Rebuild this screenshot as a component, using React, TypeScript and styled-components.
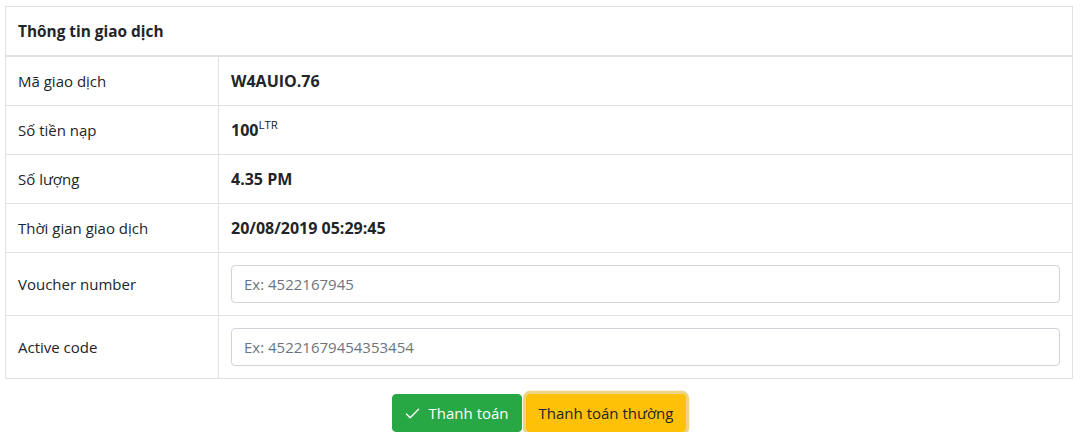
import React from "react";
import styled, { createGlobalStyle } from "styled-components";

const GlobalStyle = createGlobalStyle`
  *, *::before, *::after { box-sizing: border-box; }
  html, body { margin: 0; padding: 0; background: #fff; }
  body {
    font-family: "Open Sans", "Noto Sans", sans-serif;
    font-size: 15px;
    line-height: 24px;
    color: #212529;
  }
`;

const Page = styled.div`
  padding: 6px 8px 0 5px;
`;

const Table = styled.table`
  width: 100%;
  border-collapse: collapse;
  border: 1px solid #dee2e6;
  margin-bottom: 15px;
`;

const HeadCell = styled.th`
  text-align: left;
  font-weight: 700;
  font-size: 15.4px;
  padding: 13px 12px 11px;
  border: 1px solid #dee2e6;
  border-bottom: 2px solid #dee2e6;
  vertical-align: bottom;
`;

const LabelCell = styled.td`
  width: 213px;
  padding: 12px;
  border: 1px solid #dee2e6;
  vertical-align: middle;
`;

const ValueCell = styled.td<{ $bold?: boolean }>`
  padding: 12px;
  border: 1px solid #dee2e6;
  vertical-align: middle;
  font-weight: ${(p) => (p.$bold ? 700 : 400)};
  font-size: ${(p) => (p.$bold ? "16px" : "15px")};
`;

const Sup = styled.sup`
  font-size: 11.5px;
  font-weight: 400;
  line-height: 0;
  position: relative;
  vertical-align: baseline;
  top: -0.6em;
`;

const Input = styled.input`
  display: block;
  width: 100%;
  height: 38px;
  padding: 6px 12px;
  font-family: inherit;
  font-size: 15px;
  line-height: 24px;
  color: #495057;
  background: #fff;
  border: 1px solid #ced4da;
  border-radius: 4px;
  outline: none;
  &::placeholder { color: #6c757d; opacity: 1; }
`;

const Actions = styled.div`
  display: flex;
  justify-content: center;
  gap: 4px;
`;

const Button = styled.button<{ $variant: "success" | "warning"; $focus?: boolean }>`
  display: inline-flex;
  align-items: center;
  gap: 9px;
  height: 38px;
  padding: 6px 12px;
  font-family: inherit;
  font-size: 15px;
  line-height: 24px;
  border-radius: 4px;
  border: 1px solid ${(p) => (p.$variant === "success" ? "#28a745" : "#ffc107")};
  background: ${(p) => (p.$variant === "success" ? "#28a745" : "#ffc107")};
  color: ${(p) => (p.$variant === "success" ? "#fff" : "#212529")};
  box-shadow: ${(p) => (p.$focus ? "0 0 0 3.2px rgba(222,170,12,.5)" : "none")};
  cursor: pointer;
`;

const CheckIcon = () => (
  <svg width="15" height="15" viewBox="0 0 16 16" fill="none" stroke="currentColor" strokeWidth="1.4" strokeLinecap="round" strokeLinejoin="round">
    <polyline points="1.5,8.5 5.5,12.5 14.5,3.5" />
  </svg>
);

const rows: { label: string; value: React.ReactNode }[] = [
  { label: "Mã giao dịch", value: "W4AUIO.76" },
  { label: "Số tiền nạp", value: <>100<Sup>LTR</Sup></> },
  { label: "Số lượng", value: "4.35 PM" },
  { label: "Thời gian giao dịch", value: "20/08/2019 05:29:45" },
];

export default function App() {
  return (
    <Page>
      <GlobalStyle />
      <Table>
        <thead>
          <tr>
            <HeadCell colSpan={2}>Thông tin giao dịch</HeadCell>
          </tr>
        </thead>
        <tbody>
          {rows.map((r) => (
            <tr key={r.label}>
              <LabelCell>{r.label}</LabelCell>
              <ValueCell $bold>{r.value}</ValueCell>
            </tr>
          ))}
          <tr>
            <LabelCell>Voucher number</LabelCell>
            <ValueCell>
              <Input placeholder="Ex: 4522167945" />
            </ValueCell>
          </tr>
          <tr>
            <LabelCell>Active code</LabelCell>
            <ValueCell>
              <Input placeholder="Ex: 45221679454353454" />
            </ValueCell>
          </tr>
        </tbody>
      </Table>
      <Actions>
        <Button $variant="success">
          <CheckIcon />
          Thanh toán
        </Button>
        <Button $variant="warning" $focus>
          Thanh toán thường
        </Button>
      </Actions>
    </Page>
  );
}
